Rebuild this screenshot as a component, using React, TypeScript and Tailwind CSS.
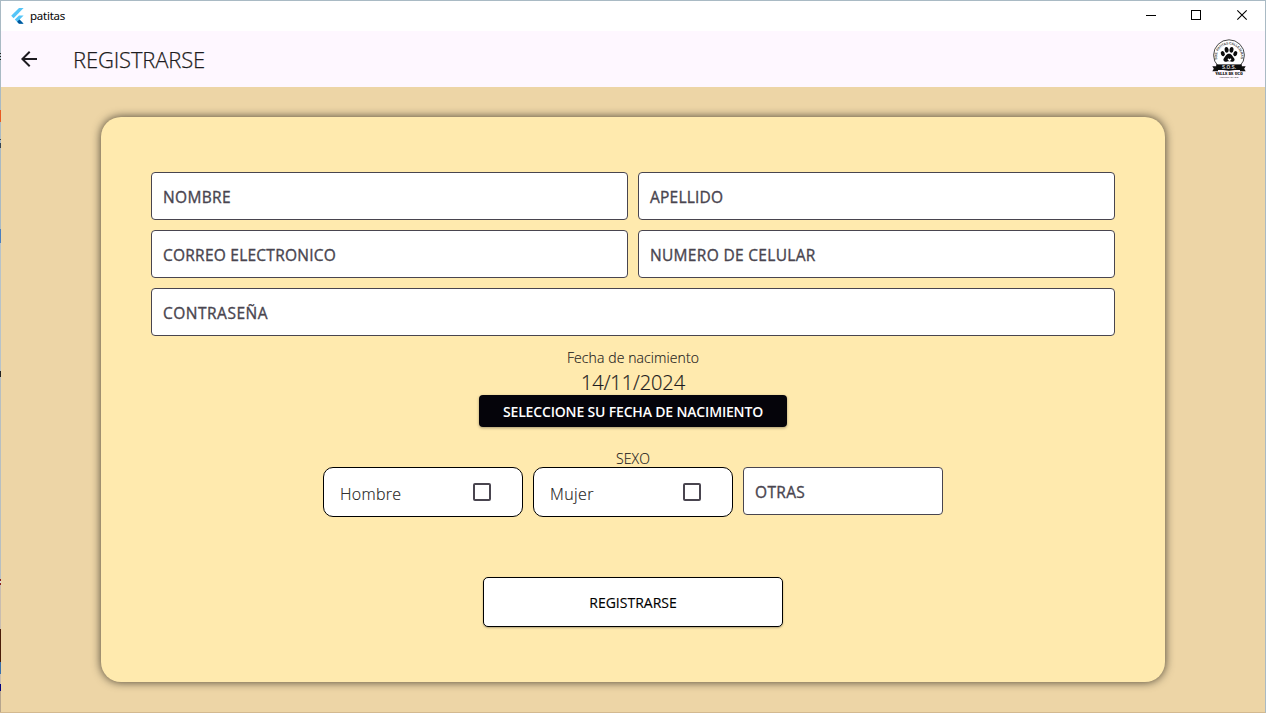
import React from "react";

function FlutterLogo() {
  return (
    <svg width="13" height="16" viewBox="0 0 13 16" className="shrink-0">
      <path d="M8 0H12.6L2.6 10.2L0.2 7.8Z" fill="#54c5f8" />
      <path d="M8 7.4H12.6L8.6 11.5L12.6 15.8H8L3.8 11.5Z" fill="#54c5f8" />
      <path d="M6.1 13.8L8.5 11.4L12.6 15.8H8Z" fill="#01579b" />
    </svg>
  );
}

function ShelterLogo() {
  return (
    <svg width="36" height="42" viewBox="0 0 36 42" fontFamily="Liberation Sans, sans-serif">
      <defs>
        <path id="arc" d="M6.4 21.5A12 12 0 1 1 29.6 21.5" />
      </defs>
      <circle cx="18" cy="17.2" r="15.4" fill="#fff" stroke="#333" strokeWidth="0.9" />
      <text fontSize="3.4" fontWeight="700" fill="#444">
        <textPath href="#arc" textLength="43" lengthAdjust="spacing">SOS. PATITAS CALLEJERAS</textPath>
      </text>
      <g fill="#0c0c0c">
        <ellipse cx="11.8" cy="15.6" rx="1.9" ry="2.6" transform="rotate(-25 11.8 15.6)" />
        <ellipse cx="15.6" cy="11.8" rx="2" ry="2.9" transform="rotate(-6 15.6 11.8)" />
        <ellipse cx="20.5" cy="11.8" rx="2" ry="2.9" transform="rotate(6 20.5 11.8)" />
        <ellipse cx="24.3" cy="15.6" rx="1.9" ry="2.6" transform="rotate(25 24.3 15.6)" />
        <path d="M18 15.8C21 15.8 21.3 18.4 22.9 20C24.8 22.2 22.5 24.6 20 23.6C18.7 23 17.5 23 16.1 23.6C13.5 24.6 11.2 22.2 13.1 20C14.8 18.4 15 15.8 18 15.8Z" />
      </g>
      <path d="M18.5 23.4L16.8 21.8C16.3 20.6 17.9 20.1 18.5 21.3C19.1 20.1 20.7 20.6 20.2 21.8Z" fill="#fff" />
      <path d="M1.3 28.2H7V33.2H1.3L2.8 30.7ZM34.7 28.2H29V33.2H34.7L33.2 30.7Z" fill="#111" />
      <rect x="5.2" y="26.4" width="25.6" height="5.6" fill="#0c0c0c" />
      <text x="18" y="30.8" fontSize="4.6" fontWeight="700" fill="#ddd" textAnchor="middle" textLength="14" lengthAdjust="spacingAndGlyphs">S.O.S.</text>
      <text x="18" y="36.6" fontSize="3" fontFamily="Liberation Serif, serif" fontWeight="700" fill="#000" stroke="#000" strokeWidth="0.2" textAnchor="middle" textLength="27">VALLE DE UCO</text>
      <text x="18" y="40.2" fontSize="2.3" fill="#222" textAnchor="middle" textLength="19" lengthAdjust="spacingAndGlyphs">VOLUNTARIADO</text>
    </svg>
  );
}

function Field({ label, spacing, className = "" }: { label: string; spacing: string; className?: string }) {
  return (
    <div className={`flex h-12 items-center rounded border border-[#49454f] bg-white px-[11px] pt-[1px] ${className}`}>
      <span className={`whitespace-nowrap text-[15.5px] font-medium leading-6 text-[#49454f] [-webkit-text-stroke:0.35px_#49454f] ${spacing}`}>{label}</span>
    </div>
  );
}

function CheckOption({ label, spacing }: { label: string; spacing: string }) {
  return (
    <div className="flex h-[50px] w-[200px] items-center justify-between rounded-[10px] border border-black bg-white pl-4 pr-[31px]">
      <span className={`pt-[3px] text-base font-light text-[#1d1b20] [-webkit-text-stroke:0.15px_#1d1b20] ${spacing}`}>{label}</span>
      <span className="size-[18px] rounded-[2px] border-2 border-[#49454f]" />
    </div>
  );
}

export default function App() {
  return (
    <div className="flex h-[713px] w-[1266px] border-y border-r border-t-[#a9bac4] border-r-[#a9bac4] border-b-[#d3b990] bg-white font-['Open_Sans','Noto_Sans',sans-serif]">
      <div className="w-px shrink-0 bg-[linear-gradient(to_bottom,#a9bac4_0_52px,#222_52px_53px,#a9bac4_53px_55px,#222_55px_56px,#a9bac4_56px_58px,#222_58px_59px,#a9bac4_59px_109px,#e85a22_109px_121px,#a9bac4_121px_138px,#345_138px_139px,#a9bac4_139px_142px,#345_142px_147px,#a9bac4_147px_228px,#4a7fc0_228px_242px,#b7c3ca_242px_370px,#222_370px_376px,#b7bfc2_376px_578px,#822_578px_580px,#ddd_580px_582px,#822_582px_584px,#c9bdb0_584px_628px,#4b1c08_628px_661px,#3971ac_661px_673px,#c9bdb0_673px_683px,#000080_683px_690px,#b6a58d_690px)]" />
      <div className="flex min-w-0 flex-1 flex-col">
        <header className="flex h-[30px] shrink-0 items-center bg-white">
          <div className="flex flex-1 items-center pl-[10px]">
            <FlutterLogo />
            <span className="ml-[6px] text-[11.5px] leading-4 tracking-[-0.2px] text-black [-webkit-text-stroke:0.1px_#000]">patitas</span>
          </div>
          <svg width="120" height="30" viewBox="0 0 120 30" fill="none" stroke="#000" className="shrink-0">
            <path d="M1 14.5H11M46.5 9.5H55.5V18.5H46.5Z" shapeRendering="crispEdges" />
            <path d="M92.3 9.3L101.7 18.7M101.7 9.3L92.3 18.7" strokeWidth="1.1" />
          </svg>
        </header>
        <div className="flex h-14 shrink-0 items-center justify-between bg-[#fef7ff] pl-4 pr-[18px]">
          <div className="flex items-center">
            <svg width="24" height="24" viewBox="0 0 24 24" fill="#1d1b20">
              <path d="M20 11H7.83l5.59-5.59L12 4l-8 8 8 8 1.41-1.41L7.83 13H20v-2z" />
            </svg>
            <h1 className="ml-8 text-[22px] font-light leading-7 tracking-[-0.15px] text-[#1d1b20] [-webkit-text-stroke:0.25px_#1d1b20]">REGISTRARSE</h1>
          </div>
          <ShelterLogo />
        </div>
        <main className="flex flex-1 flex-col bg-[#edd5a6] px-[100px] pb-[30px] pt-[30px]">
          <section className="flex flex-1 flex-col items-center rounded-[20px] bg-[#ffeaae] px-[50px] pt-[55px] shadow-[0_0_10px_rgba(0,0,0,0.7)]">
            <div className="grid w-full grid-cols-2 gap-[10px]">
              <Field label="NOMBRE" spacing="tracking-[0.35px]" />
              <Field label="APELLIDO" spacing="tracking-[0.22px]" />
              <Field label="CORREO ELECTRONICO" spacing="tracking-[0.24px]" />
              <Field label="NUMERO DE CELULAR" spacing="tracking-[0.32px]" />
              <Field label="CONTRASEÑA" spacing="tracking-[0.5px]" className="col-span-2" />
            </div>
            <p className="mt-[11px] pt-px text-sm font-light leading-5 tracking-[0.1px] text-[#1d1b20] [-webkit-text-stroke:0.15px_#1d1b20]">Fecha de nacimiento</p>
            <p className="pt-px text-xl font-light leading-7 tracking-[-0.1px] text-[#1d1b20] [-webkit-text-stroke:0.2px_#1d1b20]">14/11/2024</p>
            <button className="-mt-[2px] h-8 w-[308px] rounded bg-[#05040a] pt-[2px] text-sm font-semibold tracking-[-0.17px] text-white shadow-[0_1px_3px_rgba(0,0,0,0.35)]">
              SELECCIONE SU FECHA DE NACIMIENTO
            </button>
            <p className="mt-[21px] pt-px text-sm font-light leading-5 tracking-[0.1px] text-[#1d1b20] [-webkit-text-stroke:0.15px_#1d1b20]">SEXO</p>
            <div className="-mt-[2px] flex items-start gap-[10px]">
              <CheckOption label="Hombre" spacing="tracking-[0.3px]" />
              <CheckOption label="Mujer" spacing="tracking-[0.4px]" />
              <Field label="OTRAS" spacing="tracking-[0.35px]" className="w-[200px]" />
            </div>
            <button className="mt-[60px] h-[50px] w-[300px] rounded-[5px] border border-black bg-white pt-[2px] text-sm font-medium tracking-[0px] text-black shadow-[0_1px_2px_rgba(0,0,0,0.3)] [-webkit-text-stroke:0.15px_#000]">
              REGISTRARSE
            </button>
          </section>
        </main>
      </div>
    </div>
  );
}
